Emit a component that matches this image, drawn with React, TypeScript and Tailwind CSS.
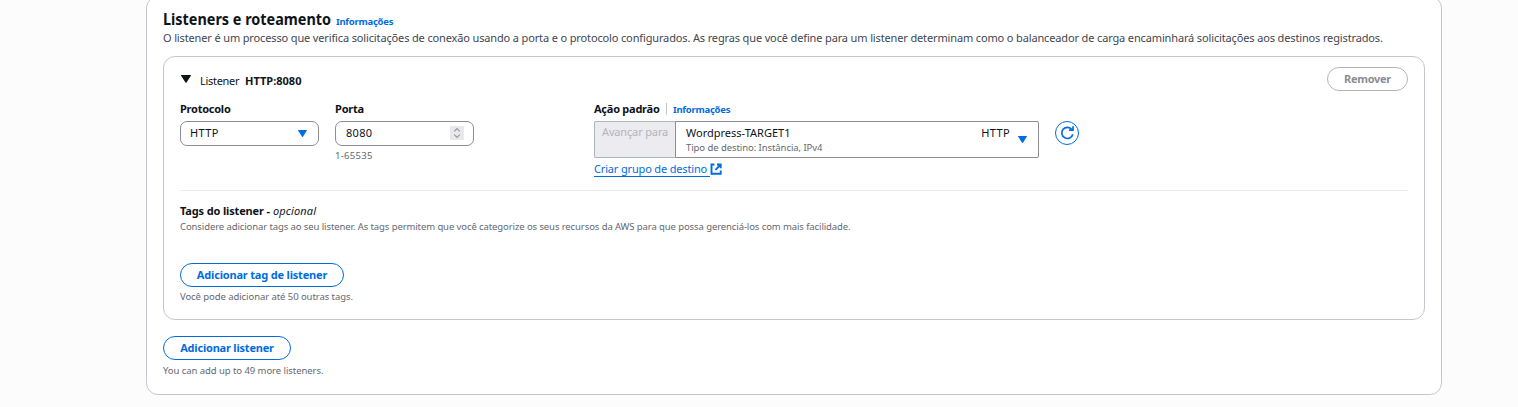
import type { ReactNode } from "react";

function Caret({ className }: { className: string }) {
  return (
    <svg viewBox="0 0 10 8" preserveAspectRatio="none" className={`shrink-0 ${className}`} fill="currentColor">
      <path d="M.4 0h9.2q.6.1.3.7L5.5 7.6q-.5.6-1 0L.1.7Q-.2.1.4 0Z" />
    </svg>
  );
}

function RefreshIcon() {
  return (
    <svg viewBox="0 0 16 16" className="size-4" fill="none" stroke="currentColor" strokeWidth="1.7">
      <path d="M13.8 9.2A5.6 5.6 0 1 1 12.9 4.6" />
      <path d="M14 1.2V5.2H10" />
    </svg>
  );
}

function ExternalIcon() {
  return (
    <svg viewBox="0 0 12 12" className="mt-[3px] size-3 shrink-0" fill="none" stroke="currentColor" strokeWidth="1.9">
      <path d="M4.5 1.5H1.5V10.7H10.7V7.5" />
      <path d="M7 1.5H10.7V5.2M10.4 1.8L5.4 6.8" />
    </svg>
  );
}

function StepperIcon() {
  return (
    <svg viewBox="0 0 14 14" className="-mt-px size-[14px] bg-[#e9e9ed]" fill="none" stroke="#9a9aa2" strokeWidth="1.3">
      <path d="M4.2 5.4L7 2.6l2.8 2.8M4.2 8.6L7 11.4l2.8-2.8" />
    </svg>
  );
}

function PillButton({ className, children }: { className: string; children: ReactNode }) {
  return (
    <button className={`flex h-6 shrink-0 items-center justify-center whitespace-nowrap rounded-full border text-[11px] font-bold leading-[22px] ${className}`}>
      {children}
    </button>
  );
}

const hint = "whitespace-nowrap text-[9.5px] leading-4 text-[#656871]";
const label = "whitespace-nowrap text-[11px] font-bold leading-4";

export default function App() {
  return (
    <div className="h-[407px] overflow-hidden bg-[#fcfcfc] font-['Noto_Sans','Open_Sans',sans-serif] text-[11px] text-[#0f141a]">
      <main className="-mt-1 ml-[146px] h-[399px] w-[1296px] rounded-xl border border-[#c6c6cd] bg-white px-4 pt-[11px]">
        <header>
          <div className="flex h-[22px] items-baseline">
            <h2 className="w-[174px] origin-left scale-x-[0.9] whitespace-nowrap text-[16px] font-bold leading-[22px]">Listeners e roteamento</h2>
            <a className="-ml-px whitespace-nowrap text-[9.5px] font-bold tracking-[-0.25px] text-[#006ce0]">Informações</a>
          </div>
          <p className="whitespace-nowrap leading-4 tracking-[-0.14px] text-[#424650]">
            O listener é um processo que verifica solicitações de conexão usando a porta e o protocolo configurados. As regras que você define para um listener determinam como o balanceador de carga encaminhará solicitações aos destinos registrados.
          </p>
        </header>

        <section className="mt-[10px] h-[264px] w-[1262px] rounded-xl border border-[#c6c6cd] px-4 pt-[10px]">
          <div className="flex h-6 items-start justify-between">
            <div className="flex items-start pl-px pt-[6px] leading-4">
              <Caret className="mt-[2px] h-2 w-[10px]" />
              <span className="ml-[9px] w-[45px] tracking-[-0.3px]">Listener</span>
              <span className="font-bold">HTTP:8080</span>
            </div>
            <PillButton className="w-[81px] border-[#b4b4bb] tracking-[-0.3px] text-[#8c8c94]">Remover</PillButton>
          </div>

          <div className="mt-[10px] flex h-[90px] items-start border-b border-[#ebebf0]">
            <div className="w-[155px]">
              <div className={`${label} tracking-[-0.25px]`}>Protocolo</div>
              <div className="mt-1 flex h-[25px] w-[139px] items-center justify-between rounded-[7px] border border-[#8c8c94] pl-[9px] pr-[11px]">
                <span className="pb-px leading-[22px] tracking-[0.4px]">HTTP</span>
                <Caret className="h-[7px] w-[9px] text-[#006ce0]" />
              </div>
            </div>

            <div className="w-[259px]">
              <div className={`${label} tracking-[-0.2px]`}>Porta</div>
              <div className="mt-1 flex h-[25px] w-[139px] items-center justify-between rounded-[7px] border border-[#8c8c94] pl-[10px] pr-[9px]">
                <span className="pb-px leading-[22px] tracking-[0.3px]">8080</span>
                <StepperIcon />
              </div>
              <div className={`${hint} mt-[2px] tracking-[0.3px]`}>1-65535</div>
            </div>

            <div className="w-[461px]">
              <div className="flex h-4 items-center">
                <span className={`${label} w-[72px] tracking-[-0.25px]`}>Ação padrão</span>
                <span className="h-3 w-px bg-[#c6c6cd]" />
                <a className="ml-[6px] pt-[2px] text-[9.5px] font-bold leading-4 tracking-[-0.25px] text-[#006ce0]">Informações</a>
              </div>
              <div className="mt-1 flex h-[37px] w-[445px]">
                <div className="w-[81px] whitespace-nowrap rounded-l-[2px] border border-r-0 border-[#aab7b8] bg-[#ebebf0] pl-[7px] pt-[2px] leading-4 tracking-[-0.15px] text-[#b4b4bb]">Avançar para</div>
                <div className="flex flex-1 rounded-r-[2px] border border-[#8c8c94] pl-[10px] pr-[11px]">
                  <div className="flex-1 pt-[3px]">
                    <div className="whitespace-nowrap leading-4">Wordpress-TARGET1</div>
                    <div className={`${hint} -mt-px tracking-[-0.07px]`}>Tipo de destino: Instância, IPv4</div>
                  </div>
                  <span className="pt-[3px] leading-4 tracking-[0.4px]">HTTP</span>
                  <Caret className="ml-2 mt-[14px] h-[7px] w-[9px] text-[#006ce0]" />
                </div>
              </div>
              <a className="mt-[2px] flex items-start text-[#006ce0]">
                <span className="h-[17px] w-[116px] whitespace-nowrap border-b border-[#006ce0] leading-[18px] tracking-[-0.16px]">Criar grupo de destino</span>
                <ExternalIcon />
              </a>
            </div>

            <button className="mt-5 flex size-6 items-center justify-center rounded-full border border-[#006ce0] text-[#006ce0]">
              <RefreshIcon />
            </button>
          </div>

          <div className="mt-3">
            <div className="flex whitespace-nowrap leading-4">
              <span className="w-[93px] font-bold tracking-[-0.15px]">Tags do listener -</span>
              <i className="tracking-[0.15px]">opcional</i>
            </div>
            <p className={`${hint} tracking-[-0.095px]`}>
              Considere adicionar tags ao seu listener. As tags permitem que você categorize os seus recursos da AWS para que possa gerenciá-los com mais facilidade.
            </p>
          </div>

          <PillButton className="mt-[28px] w-[164px] border-[#006ce0] tracking-[-0.18px] text-[#006ce0]">Adicionar tag de listener</PillButton>
          <p className={`${hint} mt-[2px] tracking-[-0.07px]`}>Você pode adicionar até 50 outras tags.</p>
        </section>

        <PillButton className="mt-4 w-[128px] border-[#006ce0] tracking-[-0.2px] text-[#006ce0]">Adicionar listener</PillButton>
        <p className={`${hint} mt-[3px] tracking-[-0.06px]`}>You can add up to 49 more listeners.</p>
      </main>
    </div>
  );
}
